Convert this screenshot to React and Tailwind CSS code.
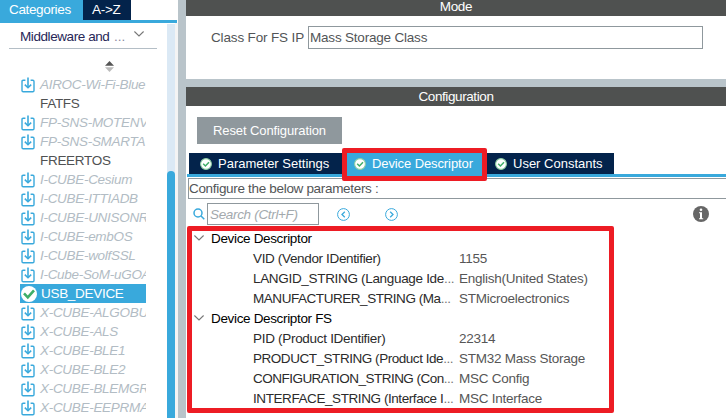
const categories = [
  { name: 'AIROC-Wi-Fi-Blue', pack: true },
  { name: 'FATFS' },
  { name: 'FP-SNS-MOTENV', pack: true },
  { name: 'FP-SNS-SMARTA', pack: true },
  { name: 'FREERTOS' },
  { name: 'I-CUBE-Cesium', pack: true },
  { name: 'I-CUBE-ITTIADB', pack: true },
  { name: 'I-CUBE-UNISONR', pack: true },
  { name: 'I-CUBE-embOS', pack: true },
  { name: 'I-CUBE-wolfSSL', pack: true },
  { name: 'I-Cube-SoM-uGOA', pack: true },
  { name: 'USB_DEVICE', selected: true },
  { name: 'X-CUBE-ALGOBU', pack: true },
  { name: 'X-CUBE-ALS', pack: true },
  { name: 'X-CUBE-BLE1', pack: true },
  { name: 'X-CUBE-BLE2', pack: true },
  { name: 'X-CUBE-BLEMGR', pack: true },
  { name: 'X-CUBE-EEPRMA', pack: true },
];

const groups = [
  {
    title: 'Device Descriptor',
    rows: [
      ['VID (Vendor IDentifier)', '1155', 'tracking-[-0.35px]'],
      ['LANGID_STRING (Language Ide', 'English(United States)', 'tracking-[-0.32px]'],
      ['MANUFACTURER_STRING (Ma', 'STMicroelectronics', 'tracking-[-0.45px]'],
    ],
  },
  {
    title: 'Device Descriptor FS',
    rows: [
      ['PID (Product IDentifier)', '22314', 'tracking-[-0.3px]'],
      ['PRODUCT_STRING (Product Ide', 'STM32 Mass Storage', 'tracking-[-0.46px]'],
      ['CONFIGURATION_STRING (Con', 'MSC Config', 'tracking-[-0.52px]'],
      ['INTERFACE_STRING (Interface I', 'MSC Interface', 'tracking-[-0.42px]'],
    ],
  },
];

function DownloadIcon() {
  return (
    <svg className="ml-px h-4 w-[14px] shrink-0" viewBox="0 0 14 16" fill="none" stroke="#39a9dc" strokeWidth="1.4">
      <path d="M4.4 3.2H2.2Q1 3.2 1 4.4v9Q1 14.7 2.2 14.7h9.6q1.2 0 1.2-1.3v-9q0-1.2-1.2-1.2H9.6" />
      <path d="M7 0.5v10" strokeWidth="1.6" />
      <path d="M3.8 7.6L7 10.8l3.2-3.2" strokeWidth="1.5" />
    </svg>
  );
}

function CheckCircle() {
  return (
    <svg className="h-3 w-3 shrink-0" viewBox="0 0 12 12" fill="none">
      <circle cx="6" cy="6" r="5.4" fill="#fff" stroke="#8fd0a4" strokeWidth="1.1" />
      <path d="M3.2 5.8l2.2 2.2 3.6-3.8" stroke="#3fae68" strokeWidth="1.5" />
    </svg>
  );
}

function Chevron() {
  return (
    <svg className="h-[6px] w-[10px] shrink-0" viewBox="0 0 10 6" fill="none" stroke="#777" strokeWidth="1.1">
      <path d="M0.4 0.5L5 5l4.6-4.5" />
    </svg>
  );
}

function RoundArrow({ d }) {
  return (
    <svg className="h-[13px] w-[13px] shrink-0" viewBox="0 0 13 13" fill="none" stroke="#39a9dc">
      <circle cx="6.5" cy="6.5" r="5.9" strokeWidth="1" />
      <path d={d} strokeWidth="1.3" />
    </svg>
  );
}

function Sidebar() {
  return (
    <aside className="flex w-[178px] shrink-0 flex-col bg-white">
      <div className="flex h-[23px] w-[177px] shrink-0 border-b-[3px] border-[#39a9dc]">
        <div className="w-[83px] bg-[#39a9dc] pl-[9px] leading-[19px] tracking-[-0.35px] text-white">Categories</div>
        <div className="w-12 bg-[#03234b] pl-[9px] leading-[19px] tracking-[-0.3px] text-white">{'A->Z'}</div>
      </div>
      <div className="flex min-h-0 grow">
        <div className="flex w-[167px] flex-col">
          <div className="ml-[9px] flex h-[26px] w-[148px] shrink-0 items-center border-b border-[#b4bec6] pl-[11px] text-[#272757]">
            <span className="w-[94px] whitespace-nowrap pt-px tracking-[-0.42px]">Middleware and</span>
            <span className="w-5 pt-px text-[#8b8ba0]">...</span>
            <span className="-mt-1"><Chevron /></span>
          </div>
          <div className="flex h-[26px] shrink-0 items-end pb-[3px] pl-[105px]">
            <svg className="h-[11px] w-[9px]" viewBox="0 0 9 11">
              <path d="M0 4.7L4.5 0 9 4.7z" fill="#555" />
              <path d="M0 6.3L4.5 11 9 6.3z" fill="#bbb" />
            </svg>
          </div>
          <ul className="tracking-[-0.3px]">
            {categories.map((c) =>
              c.selected ? (
                <li key={c.name} className="ml-5 flex h-[19px] w-[126px] items-center bg-[#39a9dc] text-white">
                  <svg className="ml-px h-4 w-4 shrink-0" viewBox="0 0 16 16" fill="none">
                    <circle cx="8" cy="8" r="8" fill="#fff" />
                    <path d="M3 7.4l3.8 4 6.2-7" stroke="#3fae68" strokeWidth="2.6" />
                  </svg>
                  <span className="ml-1">{c.name}</span>
                </li>
              ) : (
                <li key={c.name} className="ml-5 flex h-[19px] w-[126px] items-center overflow-hidden whitespace-nowrap">
                  {c.pack && <DownloadIcon />}
                  <span className={c.pack ? 'ml-[5px] italic text-[#b2bcc4]' : 'ml-5 text-[#4f5152]'}>{c.name}</span>
                </li>
              )
            )}
          </ul>
        </div>
        <div className="mt-px flex w-2 flex-col bg-[#dbe9f5]">
          <div className="mt-[147px] grow rounded-t-full bg-[#39a9dc]" />
        </div>
        <div className="w-[3px] bg-[#f4f4f4]" />
      </div>
    </aside>
  );
}

function Tab({ label, className }) {
  return (
    <div className={`flex h-[21px] items-center text-[13px] text-white ${className}`}>
      <CheckCircle />
      <span className="ml-[6px] whitespace-nowrap">{label}</span>
    </div>
  );
}

export default function App() {
  return (
    <div className="flex h-[418px] w-[726px] overflow-hidden bg-white font-['Liberation_Sans',Arial,sans-serif] text-[13.5px] leading-[15px]">
      <Sidebar />
      <div className="w-2 shrink-0 bg-[#b9c4ca]" />
      <main className="flex w-[540px] shrink-0 flex-col">
        <div className="flex h-4 shrink-0 items-center justify-center bg-[#4f5150] pb-[3px] tracking-[-0.3px] text-white">Mode</div>
        <section className="flex h-[63px] shrink-0 pl-[25px] pt-[10px] text-[#525557]">
          <span className="w-[97px] whitespace-nowrap leading-[23px] tracking-[-0.15px]">Class For FS IP</span>
          <div className="h-[23px] w-[395px] border border-[#8f989d] pl-px leading-[22px] tracking-[-0.2px]">Mass Storage Class</div>
        </section>
        <div className="h-2 shrink-0 bg-[#b9c4ca]" />
        <div className="flex h-[19px] shrink-0 items-center justify-center bg-[#4f5150] tracking-[-0.4px] text-white">Configuration</div>
        <section className="flex min-h-0 grow flex-col">
          <button className="ml-[11px] mt-[11px] h-[27px] w-[145px] shrink-0 bg-[#8f989d] text-[13px] tracking-[-0.1px] text-white">Reset Configuration</button>
          <div className="relative ml-px mt-[9px] flex h-6 shrink-0 border-b-[3px] border-[#39a9dc] pl-[2px]">
            <Tab label="Parameter Settings" className="w-[153px] bg-[#03234b] pl-[11px]" />
            <Tab label="Device Descriptor" className="w-[145px] bg-[#39a9dc] pl-3 tracking-[-0.1px]" />
            <Tab label="User Constants" className="w-[127px] bg-[#03234b] pl-2" />
            <div className="absolute -top-[5px] left-[155px] h-[33px] w-[145px] rounded-[2px] border-[5px] border-[#ed1c24]" />
          </div>
          <div className="ml-[2px] mt-px h-[21px] shrink-0 border-y border-l border-[#8f989d] leading-[20px] tracking-[-0.32px] text-[#525557]">
            Configure the below parameters :
          </div>
          <div className="mt-1 flex h-[22px] shrink-0 items-center pl-[7px]">
            <svg className="h-3 w-3" viewBox="0 0 12 12" fill="none" stroke="#39a9dc" strokeWidth="1.5">
              <circle cx="5" cy="5" r="4" />
              <path d="M8 8l3.3 3.3" />
            </svg>
            <div className="ml-[2px] h-[22px] w-[112px] border border-[#8f989d] pl-[2px] italic leading-[21px] tracking-[-0.33px] text-[#a3a9ad]">Search (Ctrl+F)</div>
            <div className="ml-[18px] flex gap-[35px]">
              <RoundArrow d="M7.8 3.8L5 6.5l2.8 2.7" />
              <RoundArrow d="M5.2 3.8L8 6.5 5.2 9.2" />
            </div>
            <svg className="ml-[295px] h-4 w-4" viewBox="0 0 16 16">
              <circle cx="8" cy="8" r="8" fill="#666" />
              <circle cx="8" cy="3.8" r="1.3" fill="#fff" />
              <path d="M6 6.2h3v6h1.2v1H6v-1h1V7.2H6z" fill="#fff" />
            </svg>
          </div>
          <div className="ml-px mt-px h-[187px] w-[427px] shrink-0 overflow-hidden rounded-[2px] border-[5px] border-[#ed1c24]">
            <div className="-mt-[3px] pl-[2px]">
              {groups.map((g) => (
                <div key={g.title}>
                  <div className="flex h-5 items-center text-black">
                    <Chevron />
                    <span className="ml-[7px] tracking-[-0.34px]">{g.title}</span>
                  </div>
                  {g.rows.map(([k, v, spacing]) => (
                    <div key={k} className="flex h-5 items-center whitespace-nowrap pl-[59px]">
                      <span className={`w-[206px] text-[#2b2b2b] ${spacing}`}>
                        {k}
                        {k.endsWith(')') ? '' : <span className="text-[#777]">...</span>}
                      </span>
                      <span className="tracking-[-0.25px] text-[#565656]">{v}</span>
                    </div>
                  ))}
                </div>
              ))}
            </div>
          </div>
        </section>
      </main>
    </div>
  );
}
